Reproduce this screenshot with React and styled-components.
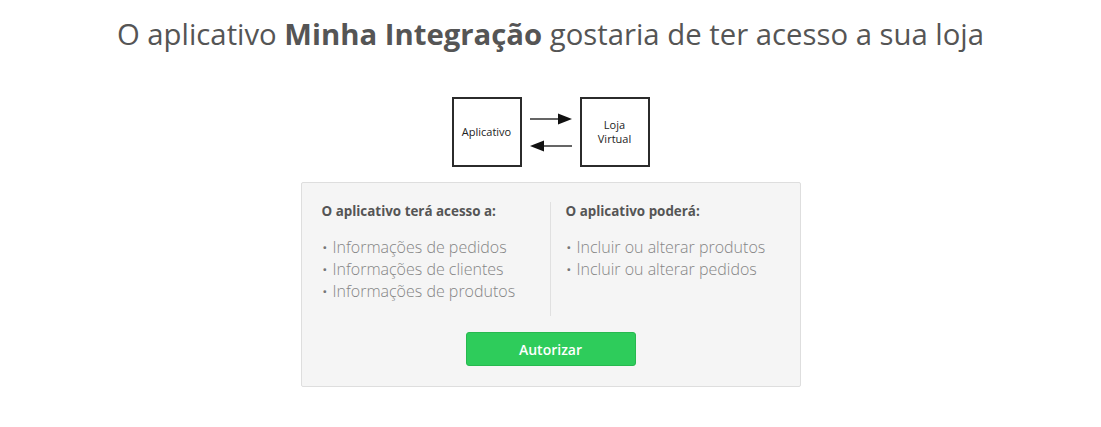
import React from 'react';
import styled, { createGlobalStyle } from 'styled-components';

const GlobalStyle = createGlobalStyle`
    body {
        margin: 0;
        background: #fff;
        font-family: "Open Sans", "Liberation Sans", sans-serif;
    }
`;

const Page = styled.div`
    display: flex;
    flex-direction: column;
    align-items: center;
    padding-top: 14px;
`;

const Title = styled.h1`
    margin: 0;
    font-size: 29.3px;
    line-height: 40px;
    font-weight: 400;
    color: #555;
    b {
        font-weight: 700;
    }
`;

const Diagram = styled.div`
    display: flex;
    align-items: center;
    gap: 8px;
    margin-top: 43px;
`;

const Box = styled.div`
    width: 66px;
    height: 66px;
    border: 2px solid #2b2b2b;
    display: flex;
    align-items: center;
    justify-content: center;
    text-align: center;
    font-size: 11px;
    line-height: 14px;
    color: #222;
`;

const Arrows = styled.svg`
    display: block;
`;

const Card = styled.div`
    width: 458px;
    margin-top: 15px;
    padding: 19px 20px 20px;
    background: #f5f5f5;
    border: 1px solid #dedede;
    border-radius: 2px;
`;

const Columns = styled.div`
    display: grid;
    grid-template-columns: 229px 1fr;
`;

const Column = styled.div`
    padding-left: ${p => (p.$right ? '15px' : '0')};
    border-right: ${p => (p.$right ? 'none' : '1px solid #e0e0e0')};
    min-height: 114px;
`;

const Heading = styled.h3`
    margin: 0;
    font-size: 13.4px;
    line-height: 18px;
    font-weight: 700;
    color: #555;
`;

const List = styled.ul`
    list-style: none;
    margin: 16px 0 0;
    padding: 0;
`;

const Item = styled.li`
    font-size: 16px;
    line-height: 22px;
    font-weight: 300;
    color: #858585;
    &::before {
        content: '·';
        display: inline-block;
        width: 10px;
        padding-left: 1px;
        font-weight: 700;
        color: #777;
    }
`;

const Actions = styled.div`
    display: flex;
    justify-content: center;
    margin-top: 16px;
`;

const Button = styled.button`
    width: 170px;
    height: 34px;
    border: 1px solid #27b94f;
    border-radius: 3px;
    background: #2ecc5b;
    color: #fff;
    font-family: inherit;
    font-size: 14px;
    font-weight: 600;
    cursor: pointer;
`;

export default function App() {
    return (
        <Page>
            <GlobalStyle />
            <Title>O aplicativo <b>Minha Integração</b> gostaria de ter acesso a sua loja</Title>
            <Diagram>
                <Box>Aplicativo</Box>
                <Arrows width="42" height="40" viewBox="0 0 42 40">
                    <line x1="0" y1="7" x2="30" y2="7" stroke="#111" strokeWidth="1.3" />
                    <polygon points="28,1.5 42,7 28,12.5" fill="#111" />
                    <line x1="12" y1="34" x2="42" y2="34" stroke="#111" strokeWidth="1.3" />
                    <polygon points="14,28.5 0,34 14,39.5" fill="#111" />
                </Arrows>
                <Box>Loja<br />Virtual</Box>
            </Diagram>
            <Card>
                <Columns>
                    <Column>
                        <Heading>O aplicativo terá acesso a:</Heading>
                        <List>
                            <Item>Informações de pedidos</Item>
                            <Item>Informações de clientes</Item>
                            <Item>Informações de produtos</Item>
                        </List>
                    </Column>
                    <Column $right>
                        <Heading>O aplicativo poderá:</Heading>
                        <List>
                            <Item>Incluir ou alterar produtos</Item>
                            <Item>Incluir ou alterar pedidos</Item>
                        </List>
                    </Column>
                </Columns>
                <Actions>
                    <Button>Autorizar</Button>
                </Actions>
            </Card>
        </Page>
    );
}
